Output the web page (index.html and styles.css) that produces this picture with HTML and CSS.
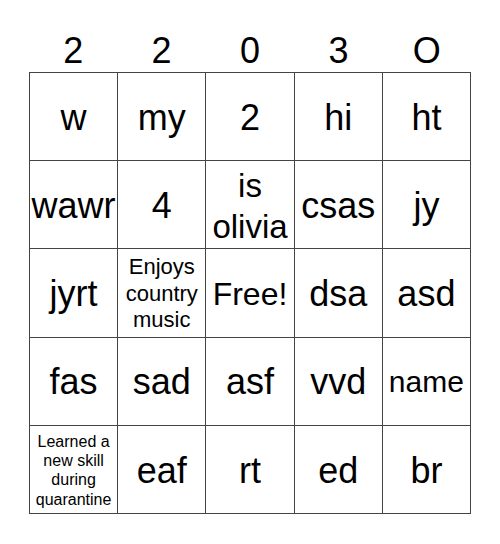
FILE: index.html
```html
<!DOCTYPE html>
<html>
<head>
<meta charset="utf-8">
<link rel="stylesheet" href="styles.css">
</head>
<body>
<div class="card">
  <div class="head">
    <span>2</span><span>2</span><span>0</span><span>3</span><span>O</span>
  </div>
  <div class="grid">
    <div class="cell">w</div>
    <div class="cell">my</div>
    <div class="cell">2</div>
    <div class="cell">hi</div>
    <div class="cell">ht</div>

    <div class="cell">wawr</div>
    <div class="cell">4</div>
    <div class="cell two">is<br>olivia</div>
    <div class="cell">csas</div>
    <div class="cell">jy</div>

    <div class="cell">jyrt</div>
    <div class="cell mid">Enjoys<br>country<br>music</div>
    <div class="cell free">Free!</div>
    <div class="cell">dsa</div>
    <div class="cell">asd</div>

    <div class="cell">fas</div>
    <div class="cell">sad</div>
    <div class="cell">asf</div>
    <div class="cell">vvd</div>
    <div class="cell name">name</div>

    <div class="cell small">Learned a<br>new skill<br>during<br>quarantine</div>
    <div class="cell">eaf</div>
    <div class="cell">rt</div>
    <div class="cell">ed</div>
    <div class="cell">br</div>
  </div>
</div>
</body>
</html>
```
FILE: styles.css
```css
html, body {
  margin: 0;
  padding: 0;
  background: #fff;
}
body {
  font-family: "Liberation Sans", Arial, sans-serif;
  color: #000;
}
.card {
  width: 442px;
  margin: 0 auto;
  padding-top: 30px;
}
.head {
  display: grid;
  grid-template-columns: repeat(5, 1fr);
  height: 42px;
  line-height: 42px;
  font-size: 36px;
  text-align: center;
}
.grid {
  display: grid;
  grid-template-columns: repeat(5, 1fr);
  grid-auto-rows: 87.2px;
  gap: 1px;
  padding: 1px;
  background: #444;
  width: 442px;
  box-sizing: border-box;
}
.cell {
  background: #fff;
  display: flex;
  align-items: center;
  justify-content: center;
  text-align: center;
  font-size: 36px;
  line-height: 1.15;
  padding-top: 2px;
  box-sizing: border-box;
}
.two {
  font-size: 33px;
  line-height: 41px;
}
.mid {
  font-size: 22px;
  line-height: 26.5px;
}
.small {
  font-size: 16px;
  line-height: 19.3px;
}
.free {
  font-size: 32px;
}
.name {
  font-size: 30px;
}
```
